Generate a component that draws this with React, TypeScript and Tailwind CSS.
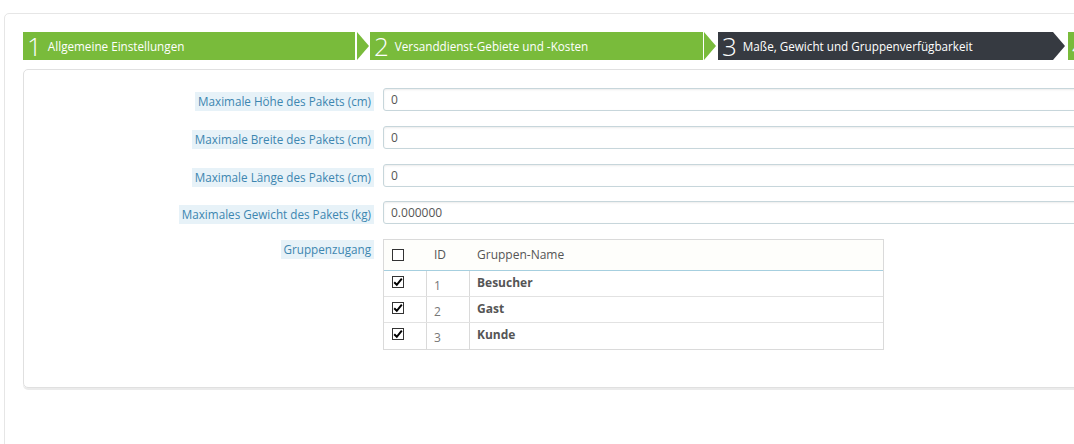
import React from "react";

const font = { fontFamily: '"Open Sans", "Liberation Sans", sans-serif' };

function Arrow({ color, gapL, gapR }: { color: string; gapL: string; gapR: string }) {
  return (
    <svg width="12" height="28" viewBox="0 0 12 28" className={`${gapL} ${gapR} shrink-0`}>
      <polygon points="0,0 12,14 0,28" fill={color} />
    </svg>
  );
}

function Step({ n, title, w, dark }: { n: string; title: string; w: string; dark?: boolean }) {
  return (
    <div className={`${w} ${dark ? "bg-[#363a41]" : "bg-[#79bb3b]"} h-[28px] shrink-0 flex items-center pl-[4px] text-white`}>
      <span className="text-[26px] font-light leading-[28px] mr-[6px]">{n}</span>
      <span className="text-[11.7px] leading-[28px] whitespace-nowrap">{title}</span>
    </div>
  );
}

function Row({ label, value, mt }: { label: string; value: string; mt: string }) {
  return (
    <div className={`flex ${mt}`}>
      <div className="w-[350px] shrink-0 flex justify-end items-start">
        <span className="mt-[4px] h-[19px] px-[3px] flex items-center bg-[#e7f2f8] text-[#3d86b0] text-[11.7px] leading-none">
          {label}
        </span>
      </div>
      <div className="ml-[9px] flex-1 h-[23px] border border-[#c7d6db] rounded-[3px] bg-white shadow-[inset_0_1px_2px_rgba(0,0,0,0.08)] flex items-center pl-[7px] text-[12px] text-[#555]">
        {value}
      </div>
    </div>
  );
}

function Box({ checked }: { checked?: boolean }) {
  return (
    <span className="w-[12px] h-[12px] border border-[#333] bg-white flex items-center justify-center">
      {checked && (
        <svg width="10" height="10" viewBox="0 0 10 10">
          <path d="M1.2 5.2 L3.8 7.8 L8.8 1.6" stroke="#000" strokeWidth="2" fill="none" />
        </svg>
      )}
    </span>
  );
}

export default function App() {
  const rows = [
    ["1", "Besucher"],
    ["2", "Gast"],
    ["3", "Kunde"],
  ];
  return (
    <div className="w-[1074px] h-[444px] overflow-hidden bg-white" style={font}>
      <div className="ml-[4px] mt-[13px] w-[1200px] h-[500px] border border-[#e6e6e6] rounded-[5px] pl-[18px] pt-[18px]">
        <div className="flex h-[28px]">
          <Step n="1" title="Allgemeine Einstellungen" w="w-[332px]" />
          <Arrow color="#79bb3b" gapL="ml-[2px]" gapR="mr-[1px]" />
          <Step n="2" title="Versanddienst-Gebiete und -Kosten" w="w-[333px]" />
          <Arrow color="#79bb3b" gapL="ml-[1px]" gapR="mr-[2px]" />
          <Step n="3" title="Maße, Gewicht und Gruppenverfügbarkeit" w="w-[335px]" dark />
          <Arrow color="#363a41" gapL="ml-0" gapR="mr-[3px]" />
          <Step n="4" title="Zusammenfassung" w="w-[300px]" />
        </div>
        <div className="mt-[9px] w-[1150px] h-[319px] border border-[#e0e0e0] rounded-[5px] shadow-[0_2px_0_rgba(0,0,0,0.08)] pt-[18px]">
          <Row label="Maximale Höhe des Pakets (cm)" value="0" mt="mt-0" />
          <Row label="Maximale Breite des Pakets (cm)" value="0" mt="mt-[15px]" />
          <Row label="Maximale Länge des Pakets (cm)" value="0" mt="mt-[15px]" />
          <Row label="Maximales Gewicht des Pakets (kg)" value="0.000000" mt="mt-[14px]" />
          <div className="flex mt-[15px]">
            <div className="w-[350px] shrink-0 flex justify-end items-start">
              <span className="mt-[1px] h-[19px] px-[3px] flex items-center bg-[#e7f2f8] text-[#3d86b0] text-[11.7px] leading-none">
                Gruppenzugang
              </span>
            </div>
            <div className="ml-[9px] w-[501px] border border-[#dadada] text-[12px] text-[#555]">
              <div className="flex h-[31px] items-center bg-[#fefefb] border-b border-[#a6cfdf]">
                <div className="w-[43px] pl-[8px] flex items-center"><Box /></div>
                <div className="w-[43px] pl-[7px]">ID</div>
                <div className="pl-[7px]">Gruppen-Name</div>
              </div>
              {rows.map(([id, name], i) => (
                <div key={id} className={`flex h-[26px] ${i < 2 ? "border-b border-[#e2e2e2]" : ""}`}>
                  <div className="w-[43px] pl-[8px] pt-[5px] border-r border-[#dadada]"><Box checked /></div>
                  <div className="w-[43px] pl-[7px] pt-[6px] border-r border-[#dadada] text-[#777]">{id}</div>
                  <div className="pl-[7px] pt-[3px] font-bold text-[#555]">{name}</div>
                </div>
              ))}
            </div>
          </div>
        </div>
      </div>
    </div>
  );
}
